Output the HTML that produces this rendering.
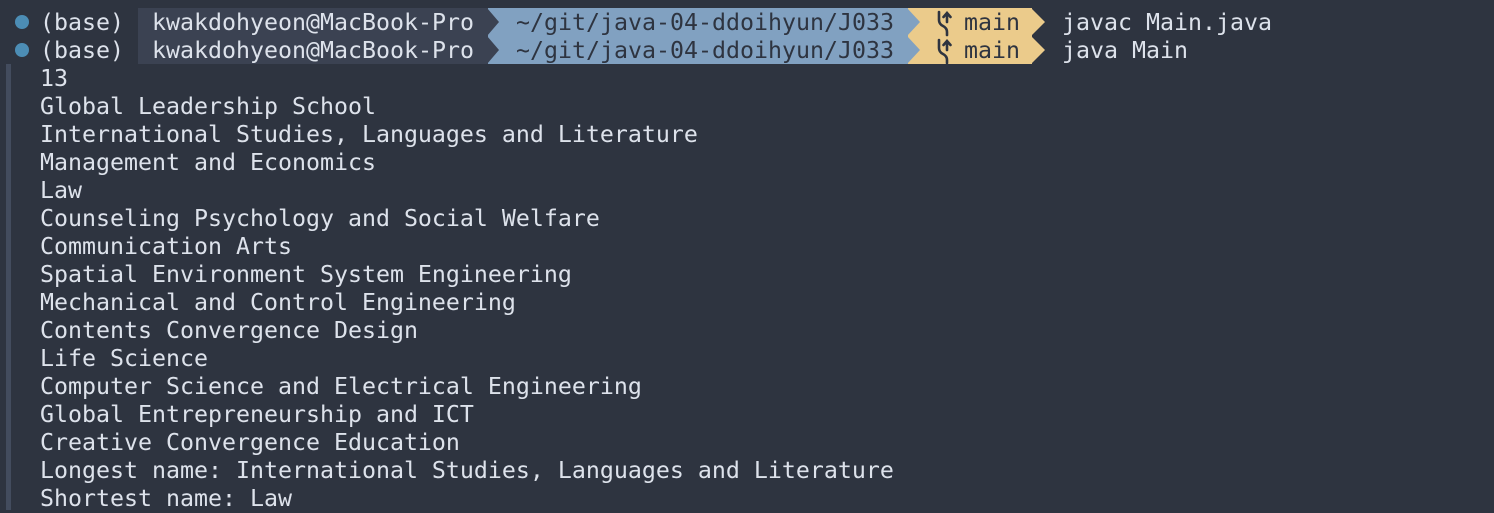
<!DOCTYPE html>
<html><head><meta charset="utf-8"><style>
html,body{margin:0;padding:0;}
body{width:1494px;height:510px;background:#2e3440;overflow:hidden;position:relative;font-family:"DejaVu Sans Mono","Liberation Mono",monospace;font-size:23.25px;color:#dde2eb;}
.t{position:absolute;white-space:pre;line-height:28px;height:28px;}
.r{position:absolute;}
.dk{color:#2e3440;}
</style></head><body>
<div class="r" style="left:138px;top:8px;width:350px;height:56px;background:#3b4252"></div>
<div class="r" style="left:488px;top:8px;width:420px;height:56px;background:#81a1c1"></div>
<div class="r" style="left:908px;top:8px;width:124px;height:56px;background:#ebcb8b"></div>
<svg class="r" style="left:0;top:0" width="1494" height="64">
 <g>
  <polygon points="487,8 499,22 487,36" fill="#3b4252"/>
  <polygon points="487,36 499,50 487,64" fill="#3b4252"/>
  <polygon points="907,8 920,22 907,36" fill="#81a1c1"/>
  <polygon points="907,36 920,50 907,64" fill="#81a1c1"/>
  <polygon points="1031,8 1045,22 1031,36" fill="#ebcb8b"/>
  <polygon points="1031,36 1045,50 1031,64" fill="#ebcb8b"/>
  <circle cx="22" cy="22" r="7" fill="#4c8db5"/>
  <circle cx="22" cy="50" r="7" fill="#4c8db5"/>
  <g fill="none" stroke="#2e3440" stroke-width="2.6" stroke-linecap="round">
   <path d="M939 12 V20 Q939 24 943 26 Q947 28 947 32 V35"/>
   <path d="M947 22 V14 M943.5 17 L947 13 L950.5 17"/>
   <path d="M939 40 V48 Q939 52 943 54 Q947 56 947 60 V63"/>
   <path d="M947 50 V42 M943.5 45 L947 41 L950.5 45"/>
  </g>
 </g>
</svg>
<div class="t" style="left:40px;top:9px">(base)</div>
<div class="t" style="left:40px;top:37px">(base)</div>
<div class="t" style="left:152px;top:9px">kwakdohyeon@MacBook-Pro</div>
<div class="t" style="left:152px;top:37px">kwakdohyeon@MacBook-Pro</div>
<div class="t dk" style="left:516px;top:9px">~/git/java-04-ddoihyun/J033</div>
<div class="t dk" style="left:516px;top:37px">~/git/java-04-ddoihyun/J033</div>
<div class="t dk" style="left:964px;top:9px">main</div>
<div class="t dk" style="left:964px;top:37px">main</div>
<div class="t" style="left:1062px;top:9px">javac Main.java</div>
<div class="t" style="left:1062px;top:37px">java Main</div>
<div class="r" style="left:6px;top:64px;width:5px;height:446px;background:#434c5e"></div>
<div class="t" style="left:40px;top:65px;height:auto">13
Global Leadership School
International Studies, Languages and Literature
Management and Economics
Law
Counseling Psychology and Social Welfare
Communication Arts
Spatial Environment System Engineering
Mechanical and Control Engineering
Contents Convergence Design
Life Science
Computer Science and Electrical Engineering
Global Entrepreneurship and ICT
Creative Convergence Education
Longest name: International Studies, Languages and Literature
Shortest name: Law</div>
</body></html>
